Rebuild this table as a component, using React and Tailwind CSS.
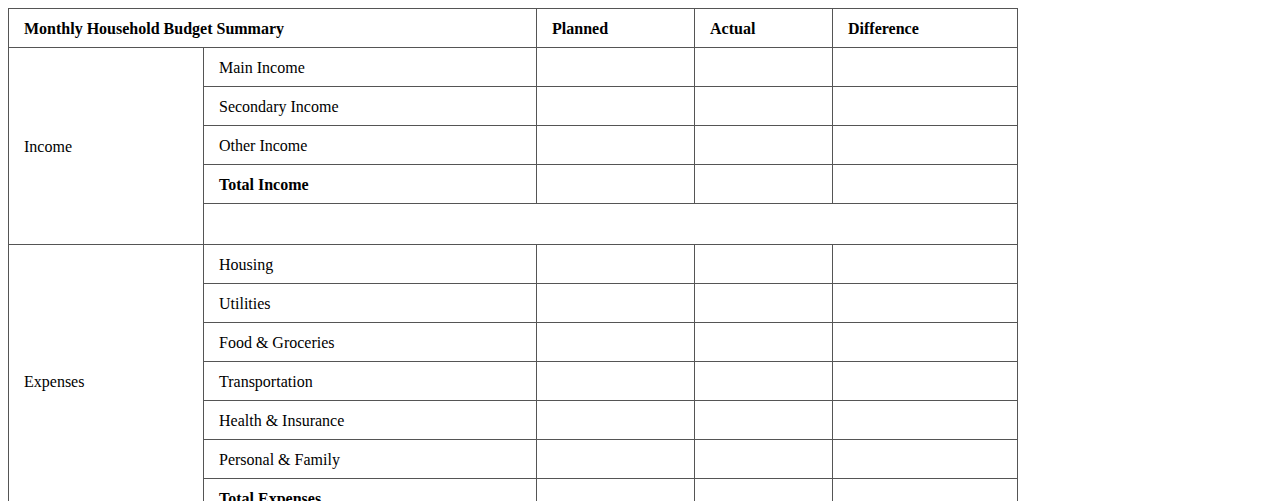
const income = ["Main Income", "Secondary Income", "Other Income"];
const expenses = [
  "Housing",
  "Utilities",
  "Food & Groceries",
  "Transportation",
  "Health & Insurance",
  "Personal & Family",
];

const cell = "border border-[#555] px-[15px] pt-[2px] pb-0 text-left align-middle";

function Blanks() {
  return (
    <>
      <td className={cell}></td>
      <td className={cell}></td>
      <td className={cell}></td>
    </>
  );
}

export default function App() {
  return (
    <div className="bg-white min-h-screen p-2 text-black text-[16px] font-['Liberation_Serif','Times_New_Roman',serif]">
      <table className="border-collapse table-fixed w-[1009px]">
        <colgroup>
          <col className="w-[195px]" />
          <col className="w-[333px]" />
          <col className="w-[158px]" />
          <col className="w-[138px]" />
          <col className="w-[185px]" />
        </colgroup>
        <tbody>
          <tr className="h-[39px]">
            <th className={cell + " font-bold"} colSpan={2}>
              Monthly Household Budget Summary
            </th>
            <th className={cell + " font-bold"}>Planned</th>
            <th className={cell + " font-bold"}>Actual</th>
            <th className={cell + " font-bold"}>Difference</th>
          </tr>

          {/* income block */}
          <tr className="h-[39px]">
            <td className={cell} rowSpan={5}>
              Income
            </td>
            <td className={cell}>{income[0]}</td>
            <Blanks />
          </tr>
          {income.slice(1).map((name) => (
            <tr key={name} className="h-[39px]">
              <td className={cell}>{name}</td>
              <Blanks />
            </tr>
          ))}
          <tr className="h-[39px]">
            <td className={cell + " font-bold"}>Total Income</td>
            <Blanks />
          </tr>
          <tr className="h-[41px]">
            <td className={cell} colSpan={4}></td>
          </tr>

          {/* expenses block */}
          <tr className="h-[39px]">
            <td className={cell} rowSpan={7}>
              Expenses
            </td>
            <td className={cell}>{expenses[0]}</td>
            <Blanks />
          </tr>
          {expenses.slice(1).map((name) => (
            <tr key={name} className="h-[39px]">
              <td className={cell}>{name}</td>
              <Blanks />
            </tr>
          ))}
          <tr className="h-[39px]">
            <td className={cell + " font-bold"}>Total Expenses</td>
            <Blanks />
          </tr>
          <tr className="h-[41px]">
            <td className={cell}></td>
            <td className={cell} colSpan={4}></td>
          </tr>
        </tbody>
      </table>
    </div>
  );
}
